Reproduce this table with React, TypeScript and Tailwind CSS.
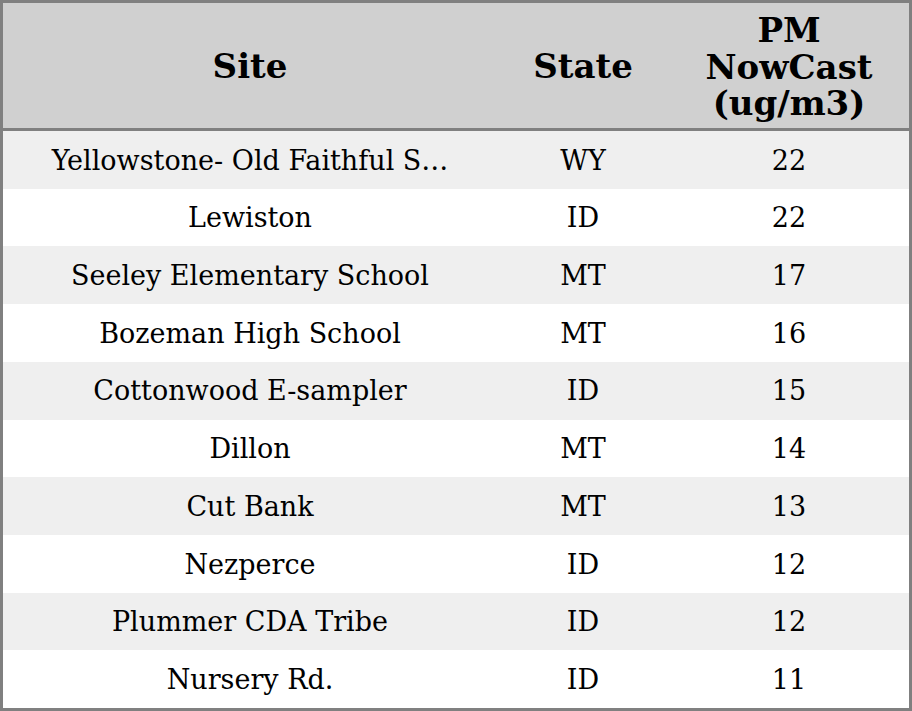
import React from "react";

const rows: [string, string, string][] = [
  ["Yellowstone- Old Faithful S…", "WY", "22"],
  ["Lewiston", "ID", "22"],
  ["Seeley Elementary School", "MT", "17"],
  ["Bozeman High School", "MT", "16"],
  ["Cottonwood E-sampler", "ID", "15"],
  ["Dillon", "MT", "14"],
  ["Cut Bank", "MT", "13"],
  ["Nezperce", "ID", "12"],
  ["Plummer CDA Tribe", "ID", "12"],
  ["Nursery Rd.", "ID", "11"],
];

export default function App() {
  return (
    <div
      className="w-[912px] h-[711px] border-[3px] border-[#808080] flex flex-col text-black bg-white"
      style={{ fontFamily: '"DejaVu Serif", serif' }}
    >
      <div className="h-[125px] bg-[#d0d0d0] grid grid-cols-[494px_172px_240px] items-center text-center font-bold text-[34px] leading-[36px] border-b-[3px] border-[#808080] box-content">
        <div>Site</div>
        <div>State</div>
        <div className="flex flex-col items-center pt-[2px]">
          <div className="h-[37px]">PM</div>
          <div className="h-[36px]">NowCast</div>
          <div className="h-[36px]">(ug/m3)</div>
        </div>
      </div>
      <div className="flex-1 flex flex-col">
        {rows.map((r, i) => (
          <div
            key={i}
            className={`flex-1 grid grid-cols-[494px_172px_240px] items-center text-center text-[27px] pt-[2px] ${
              i % 2 === 0 ? "bg-[#efefef]" : "bg-white"
            }`}
          >
            <div className="whitespace-nowrap">{r[0]}</div>
            <div>{r[1]}</div>
            <div>{r[2]}</div>
          </div>
        ))}
      </div>
    </div>
  );
}
